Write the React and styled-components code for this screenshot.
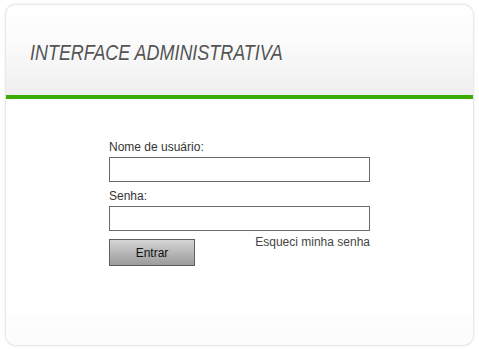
import styled, { createGlobalStyle } from "styled-components";

const GlobalStyle = createGlobalStyle`
  html, body {
    margin: 0;
    padding: 0;
    background: #ffffff;
  }
  body {
    font-family: "Liberation Sans", Arial, sans-serif;
  }
`;

const Page = styled.div`
  width: 479px;
  height: 349px;
  padding: 5px 6px 4px 6px;
  box-sizing: border-box;
`;

const Card = styled.div`
  height: 100%;
  display: flex;
  flex-direction: column;
  border-radius: 10px;
  overflow: hidden;
  background: #ffffff;
  box-shadow: 0 0 2px 1px rgba(0, 0, 0, 0.12);
`;

const Header = styled.div`
  height: 94px;
  display: flex;
  align-items: center;
  padding: 5px 24px 0;
  box-sizing: border-box;
  background: linear-gradient(to bottom, #ffffff 0%, #fbfbfb 40%, #efefef 100%);
  border-bottom: 4px solid #3aad00;
`;

/* narrow italic face: no narrow font installed, so squeeze horizontally */
const Title = styled.h1`
  margin: 0;
  font-family: "Liberation Sans", Arial, sans-serif;
  font-style: italic;
  font-weight: 400;
  font-size: 22px;
  color: #545454;
  white-space: nowrap;
  transform: scaleX(0.815);
  transform-origin: left center;
  text-shadow: 0 1px 0 rgba(255, 255, 255, 0.8);
`;

const Body = styled.div`
  flex: 1;
  display: flex;
  justify-content: center;
  padding-top: 41px;
  background: linear-gradient(to bottom, #ffffff 0%, #ffffff 88%, #fdfdfd 88%, #fcfcfc 100%);
`;

const Form = styled.form`
  width: 261px;
  display: flex;
  flex-direction: column;
`;

const Label = styled.label`
  font-size: 12px;
  line-height: 14px;
  color: #333333;
  margin-top: ${({ $top }) => $top || 0}px;
`;

const Input = styled.input`
  margin-top: 3px;
  height: 25px;
  box-sizing: border-box;
  border: 1px solid #6a6a6a;
  background: #ffffff;
  padding: 2px 4px;
  font-size: 12px;
  outline: none;
`;

const Actions = styled.div`
  display: flex;
  justify-content: space-between;
  align-items: flex-start;
`;

const Button = styled.button`
  margin-top: 8px;
  width: 86px;
  height: 27px;
  border: 1px solid #5e5e5e;
  background: linear-gradient(to bottom, #d6d6d6 0%, #b4b4b4 55%, #9c9c9c 100%);
  font-family: "Liberation Sans", Arial, sans-serif;
  font-size: 12px;
  color: #111111;
  padding: 0;
  cursor: pointer;
`;

const Forgot = styled.a`
  margin-top: 4px;
  font-size: 12px;
  line-height: 14px;
  color: #444444;
  text-decoration: none;
`;

export default function App() {
  return (
    <>
      <GlobalStyle />
      <Page>
        <Card>
          <Header>
            <Title>INTERFACE ADMINISTRATIVA</Title>
          </Header>
          <Body>
            <Form onSubmit={(e) => e.preventDefault()}>
              <Label htmlFor="user">Nome de usuário:</Label>
              <Input id="user" type="text" />
              <Label htmlFor="pass" $top={7}>
                Senha:
              </Label>
              <Input id="pass" type="password" />
              <Actions>
                <Button type="submit">Entrar</Button>
                <Forgot href="#">Esqueci minha senha</Forgot>
              </Actions>
            </Form>
          </Body>
        </Card>
      </Page>
    </>
  );
}
